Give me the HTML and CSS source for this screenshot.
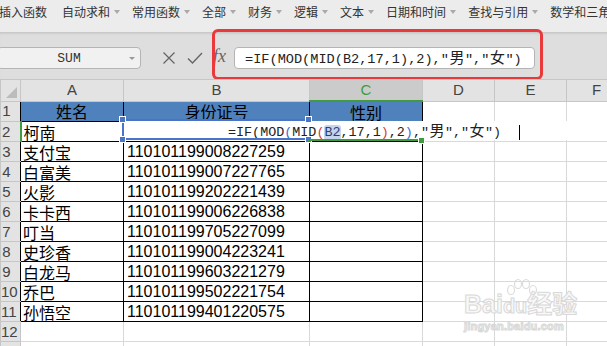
FILE: index.html
```html
<!DOCTYPE html>
<html lang="zh-CN">
<head>
    <meta charset="UTF-8">
    <title>身份证号判断性别</title>
    <link rel="stylesheet" href="styles.css">
</head>
<body>
    <div class="menubar">
        <span class="mi first">插入函数</span>
        <span class="mi">自动求和<i class="dd"></i></span>
        <span class="mi">常用函数<i class="dd"></i></span>
        <span class="mi">全部<i class="dd"></i></span>
        <span class="mi">财务<i class="dd"></i></span>
        <span class="mi">逻辑<i class="dd"></i></span>
        <span class="mi">文本<i class="dd"></i></span>
        <span class="mi">日期和时间<i class="dd"></i></span>
        <span class="mi">查找与引用<i class="dd"></i></span>
        <span class="mi">数学和三角<i class="dd"></i></span>
    </div>

    <div class="fbar">
        <div class="namebox"><span>SUM</span><i class="nb-arrow"></i></div>
        <svg class="fbtn" width="14" height="14" viewBox="0 0 14 14">
            <path d="M1.5 1.5 L12.5 12.5 M12.5 1.5 L1.5 12.5" stroke="#666" stroke-width="1.3" fill="none"/>
        </svg>
        <svg class="fbtn ok" width="16" height="14" viewBox="0 0 16 14">
            <path d="M1 7.5 L5.5 12 L15 2" stroke="#666" stroke-width="1.4" fill="none"/>
        </svg>
        <span class="fx">fx</span>
        <div class="finput">=IF(MOD(MID(B2,17,1),2),"<span class="cjk">男</span>","<span class="cjk">女</span>")</div>
        <!-- 红色标注框 -->
        <div class="mark"></div>
    </div>

    <div class="sheet">
        <table class="grid">
            <colgroup>
                <col style="width:20px">
                <col style="width:103px">
                <col style="width:186px">
                <col style="width:113px">
                <col style="width:72px">
                <col style="width:72px">
                <col style="width:60px">
            </colgroup>
            <tr class="colhead">
                <th class="corner"><i class="tri"></i></th>
                <th>A</th>
                <th>B</th>
                <th class="cur">C</th>
                <th>D</th>
                <th>E</th>
                <th>F</th>
            </tr>
            <tr>
                <th class="rh t">1</th>
                <td class="t head">姓名</td>
                <td class="t head">身份证号</td>
                <td class="t head">性别</td>
                <td></td><td></td><td></td>
            </tr>
            <tr>
                <th class="rh t cur">2</th>
                <td class="t name">柯南</td>
                <td class="t"></td>
                <td class="t"></td>
                <td></td><td></td><td></td>
            </tr>
            <tr><th class="rh t">3</th><td class="t name">支付宝</td><td class="t id">110101199008227259</td><td class="t"></td><td></td><td></td><td></td></tr>
            <tr><th class="rh t">4</th><td class="t name">白富美</td><td class="t id">110101199007227765</td><td class="t"></td><td></td><td></td><td></td></tr>
            <tr><th class="rh t">5</th><td class="t name">火影</td><td class="t id">110101199202221439</td><td class="t"></td><td></td><td></td><td></td></tr>
            <tr><th class="rh t">6</th><td class="t name">卡卡西</td><td class="t id">110101199006226838</td><td class="t"></td><td></td><td></td><td></td></tr>
            <tr><th class="rh t">7</th><td class="t name">叮当</td><td class="t id">110101199705227099</td><td class="t"></td><td></td><td></td><td></td></tr>
            <tr><th class="rh t">8</th><td class="t name">史珍香</td><td class="t id">110101199004223241</td><td class="t"></td><td></td><td></td><td></td></tr>
            <tr><th class="rh t">9</th><td class="t name">白龙马</td><td class="t id">110101199603221279</td><td class="t"></td><td></td><td></td><td></td></tr>
            <tr><th class="rh t">10</th><td class="t name">乔巴</td><td class="t id">110101199502221754</td><td class="t"></td><td></td><td></td><td></td></tr>
            <tr><th class="rh t">11</th><td class="t name">孙悟空</td><td class="t id">110101199401220575</td><td class="t"></td><td></td><td></td><td></td></tr>
            <tr><th class="rh">12</th><td></td><td></td><td></td><td></td><td></td><td></td></tr>
            <tr><th class="rh">13</th><td></td><td></td><td></td><td></td><td></td><td></td></tr>
        </table>

        <!-- 单元格内编辑 -->
        <div class="editor">=IF(MOD<span class="pb">(</span>MID<span class="pr">(</span><span class="ref">B2</span>,17,1<span class="pr">)</span>,2<span class="pb">)</span>,"<span class="cjk">男</span>","<span class="cjk">女</span>")<i class="caret"></i></div>
        <div class="refbox">
            <i class="hd tl"></i><i class="hd tr"></i><i class="hd bl"></i><i class="hd br"></i>
        </div>
        <div class="active"><i class="fill"></i></div>

        <div class="watermark">
            <svg class="paw" width="40" height="22" viewBox="0 0 40 22">
                <g fill="none" stroke="#dcdcdc" stroke-width="1.2">
                    <ellipse cx="9" cy="12" rx="3.5" ry="4.5"/>
                    <ellipse cx="16" cy="6" rx="3.5" ry="4.5"/>
                    <ellipse cx="24" cy="6" rx="3.5" ry="4.5"/>
                    <ellipse cx="31" cy="12" rx="3.5" ry="4.5"/>
                </g>
            </svg>
            <div class="wm-main">Bai<span class="du">du</span>经验</div>
            <div class="wm-sub">jingyan.baidu.com</div>
        </div>
    </div>
</body>
</html>
```

FILE: styles.css
```css
body {
    margin: 0;
    width: 607px;
    height: 346px;
    overflow: hidden;
    background-color: #fff;
    font-family: 'Liberation Sans', 'Noto Sans CJK SC', sans-serif;
}

/* 顶部函数菜单 */
.menubar {
    height: 32px;
    box-sizing: border-box;
    padding-bottom: 9px;
    display: flex;
    align-items: center;
    gap: 12px;
    background-color: #ececec;
    font-family: 'Noto Sans CJK SC', sans-serif;
    font-size: 12px;
    color: #333;
    white-space: nowrap;
}

.mi {
    display: flex;
    align-items: center;
}

.mi.first {
    margin-left: -1px;
    margin-right: 3px;
}

.dd {
    width: 0;
    height: 0;
    margin-left: 4px;
    border-left: 3px solid transparent;
    border-right: 3px solid transparent;
    border-top: 4px solid #aaa;
}

/* 编辑栏 */
.fbar {
    position: relative;
    height: 47px;
    display: flex;
    align-items: flex-start;
    background-color: #dedede;
    box-shadow: inset 0 3px 3px -2px rgba(0,0,0,0.15);
}

.namebox {
    margin-top: 15px;
    margin-left: -3px;
    width: 144px;
    height: 22px;
    box-sizing: border-box;
    border: 1px solid #b4b4b4;
    border-radius: 4px;
    background-color: #f1f1f1;
    display: flex;
    align-items: center;
    justify-content: center;
    position: relative;
    font-family: 'Liberation Mono', monospace;
    font-size: 13px;
    color: #333;
}

.nb-arrow {
    position: absolute;
    right: 5px;
    top: 9px;
    border-left: 3px solid transparent;
    border-right: 3px solid transparent;
    border-top: 3px solid #999;
}

.fbtn {
    margin-top: 19px;
    margin-left: 21px;
}

.fbtn.ok {
    margin-left: 11px;
}

.fx {
    margin-top: 14px;
    margin-left: 10px;
    font-family: 'Liberation Serif', serif;
    font-style: italic;
    font-size: 18px;
    color: #666;
}

.finput {
    margin-top: 15px;
    margin-left: 8px;
    width: 301px;
    height: 22px;
    box-sizing: border-box;
    padding-left: 10px;
    border: 1px solid #b4b4b4;
    border-radius: 4px;
    background-color: #fff;
    font-family: 'Liberation Mono', monospace;
    font-size: 13.6px;
    line-height: 20px;
    color: #222;
    white-space: nowrap;
}

.cjk {
    display: inline-block;
    width: 16px;
    text-align: center;
    font-family: 'Noto Sans CJK SC', sans-serif;
    font-size: 15px;
    line-height: 18px;
}

.mark {
    position: absolute;
    left: 212px;
    top: -3px;
    width: 331px;
    height: 51px;
    box-sizing: border-box;
    border: 3px solid #e9393b;
    border-radius: 6px;
}

/* 表格区域 */
.sheet {
    position: relative;
}

.grid {
    border-collapse: collapse;
    table-layout: fixed;
    width: 626px;
}

.grid th,
.grid td {
    height: 19px;
    padding: 0;
    border: 1px solid #d9d9d9;
    white-space: nowrap;
    overflow: visible;
    font-weight: normal;
    line-height: 18px;
}

.colhead th {
    height: 20px;
    background-color: #e3e3e3;
    border-color: #c6c6c6;
    font-size: 15px;
    color: #444;
}

.colhead th.cur {
    background-color: #cbcbcb;
    border-bottom: 2px solid #3e9c3e;
    color: #3e9c3e;
}

.corner {
    position: relative;
}

.tri {
    position: absolute;
    right: 3px;
    bottom: 3px;
    width: 0;
    height: 0;
    border-left: 11px solid transparent;
    border-bottom: 11px solid #bcbcbc;
}

.rh {
    background-color: #e3e3e3;
    border-color: #c6c6c6 !important;
    text-align: center;
    padding-right: 8px !important;
    font-size: 15px;
    color: #444;
    overflow: visible;
}

.rh.t {
    border-right-color: #000 !important;
}

.rh.cur {
    border-right: 2px solid #3e9c3e !important;
}

.grid td.t {
    border: 1px solid #000;
}

.head {
    background-color: #4f81bd;
    text-align: center;
    font-family: 'Noto Sans CJK SC', sans-serif;
    font-weight: bold;
    font-size: 16px;
    color: #000;
}

.name {
    padding-left: 2px !important;
    font-family: 'Noto Sans CJK SC', sans-serif;
    font-size: 16px;
    color: #000;
}

.id {
    padding-left: 3px !important;
    font-size: 16px;
    color: #000;
}

/* 编辑中的单元格 */
.editor {
    position: absolute;
    left: 123px;
    top: 42px;
    width: 484px;
    height: 19px;
    box-sizing: border-box;
    padding-left: 105px;
    background-color: #fff;
    font-family: 'Liberation Mono', monospace;
    font-size: 13.4px;
    line-height: 19px;
    color: #222;
    white-space: nowrap;
}

.pb { color: #3b6fd6; }
.pr { color: #d04040; }

.ref {
    background-color: #c5d5ee;
    border-radius: 3px;
    color: #2a3f7a;
}

.caret {
    position: absolute;
    left: 396px;
    top: 4px;
    width: 1px;
    height: 15px;
    background-color: #000;
}

.refbox {
    position: absolute;
    left: 122px;
    top: 40px;
    width: 186px;
    height: 21px;
    box-sizing: border-box;
    border-top: 2px solid #4a74c9;
    border-bottom: 2px solid #4a74c9;
    border-left: 2px solid #4a74c9;
}

.hd {
    position: absolute;
    width: 5px;
    height: 5px;
    background-color: #4a74c9;
    border: 1px solid #fff;
}

.hd.tl { left: -5px; top: -5px; }
.hd.tr { right: -4px; top: -5px; }
.hd.bl { left: -5px; bottom: -5px; }
.hd.br { right: -4px; bottom: -5px; }

.active {
    position: absolute;
    left: 308px;
    top: 60px;
    width: 113px;
    height: 2px;
    background-color: #3e9c3e;
}

.fill {
    position: absolute;
    right: -4px;
    top: -2px;
    width: 5px;
    height: 5px;
    background-color: #3e9c3e;
    border: 1px solid #fff;
}

/* 水印 */
.watermark {
    position: absolute;
    left: 464px;
    top: 211px;
    width: 115px;
    color: #f8f8f8;
    -webkit-text-stroke: 1px #d8d8d8;
    font-family: 'Liberation Sans', 'Noto Sans CJK SC', sans-serif;
}

.paw {
    position: absolute;
    left: 38px;
    top: -12px;
}

.wm-main {
    font-size: 25px;
    font-weight: bold;
    line-height: 28px;
}

.du {
    font-size: 20px;
}

.wm-sub {
    font-size: 11px;
    font-weight: bold;
    letter-spacing: 0.2px;
}
```
